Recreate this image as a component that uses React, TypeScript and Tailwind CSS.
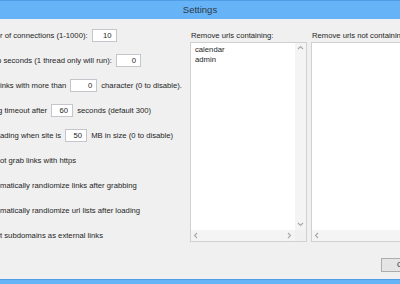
import * as React from "react";

function Chevron({ dir }: { dir: "up" | "down" | "left" | "right" }): React.ReactElement {
  const d = {
    up: "M1 4 L3.5 1.5 L6 4",
    down: "M1 2 L3.5 4.5 L6 2",
    left: "M4 1 L1.5 3.5 L4 6",
    right: "M2 1 L4.5 3.5 L2 6",
  }[dir];
  return (
    <svg width="7" height="7" viewBox="0 0 7 7" className="block">
      <path d={d} fill="none" stroke="#a8a8a8" strokeWidth="1.1" />
    </svg>
  );
}

function NumBox({ value, width }: { value: string; width: string }): React.ReactElement {
  return (
    <div
      className={`${width} h-[13px] shrink-0 border border-[#c4c6cc] bg-white pr-[4px] text-right leading-[11px]`}
    >
      {value}
    </div>
  );
}

function ListBox({ lines, label }: { lines: string[]; label: string }): React.ReactElement {
  return (
    <div className="flex w-[117px] shrink-0 flex-col">
      <div className="h-[13px] whitespace-nowrap pl-[1px] leading-[13px]">{label}</div>
      <div className="flex h-[200px] flex-col border border-[#d0d0d0] bg-white">
        <div className="flex min-h-0 flex-1">
          <div className="flex-1 px-[4px] pt-[2px] leading-[10px]">
            {lines.map((line) => (
              <div key={line}>{line}</div>
            ))}
          </div>
          <div className="flex w-[11px] flex-col items-center justify-between bg-[#f4f4f4] py-[2px]">
            <Chevron dir="up" />
            <Chevron dir="down" />
          </div>
        </div>
        <div className="flex h-[11px]">
          <div className="flex flex-1 items-center justify-between bg-[#f4f4f4] px-[2px]">
            <Chevron dir="left" />
            <Chevron dir="right" />
          </div>
          <div className="w-[11px] bg-[#f0f0f0]" />
        </div>
      </div>
    </div>
  );
}

export default function App(): React.ReactElement {
  return (
    <div className="flex h-[284px] w-[400px] flex-col overflow-hidden font-['Liberation_Sans',Arial,sans-serif] text-[7.7px] text-[#1e1e1e]">
      <div className="flex h-[19px] shrink-0 items-center justify-center border-t border-[#4f9de6] bg-[#66b3f7] text-[9.5px] text-[#2e3a46]">
        Settings
      </div>

      <div className="flex min-h-0 flex-1 flex-col bg-[#f0f0f0]">
        <div className="flex">
          <div className="flex w-[187px] shrink-0 flex-col pt-[4px]">
            <div className="flex h-[25px] items-center gap-[4px] whitespace-nowrap">
              <span>r of connections (1-1000):</span>
              <NumBox value="10" width="w-[25px]" />
            </div>
            <div className="flex h-[25px] items-center gap-[4px] whitespace-nowrap">
              <span className="-ml-[3px]">n seconds (1 thread only will run):</span>
              <NumBox value="0" width="w-[25px]" />
            </div>
            <div className="flex h-[25px] items-center gap-[4px] whitespace-nowrap">
              <span>inks with more than</span>
              <NumBox value="0" width="w-[27px]" />
              <span>character (0 to disable).</span>
            </div>
            <div className="flex h-[25px] items-center gap-[4px] whitespace-nowrap">
              <span className="-ml-[2px]">g timeout after</span>
              <NumBox value="60" width="w-[22px]" />
              <span>seconds (default 300)</span>
            </div>
            <div className="flex h-[25px] items-center gap-[4px] whitespace-nowrap">
              <span>ading when site is</span>
              <NumBox value="50" width="w-[22px]" />
              <span>MB in size (0 to disable)</span>
            </div>
            <div className="flex h-[25px] items-center whitespace-nowrap">ot grab links with https</div>
            <div className="flex h-[25px] items-center whitespace-nowrap">
              matically randiomize links after grabbing
            </div>
            <div className="flex h-[25px] items-center whitespace-nowrap">
              matically randiomize url lists after loading
            </div>
            <div className="flex h-[25px] items-center whitespace-nowrap">t subdomains as external links</div>
          </div>

          <div className="ml-[3px] flex gap-[4px] pt-[10px]">
            <ListBox label="Remove urls containing:" lines={["calendar", "admin"]} />
            <ListBox label="Remove urls not containing:" lines={[]} />
          </div>
        </div>

        <div className="flex justify-end pt-[10px]">
          <button
            type="button"
            className="-mr-[37px] h-[14px] w-[56px] border border-[#adadad] bg-[#e5e5e5] text-center leading-[12px]"
          >
            Cancel
          </button>
        </div>
      </div>

      <div className="h-[5px] shrink-0 border-t border-[#4f9de6] bg-[#66b3f7]" />
    </div>
  );
}
